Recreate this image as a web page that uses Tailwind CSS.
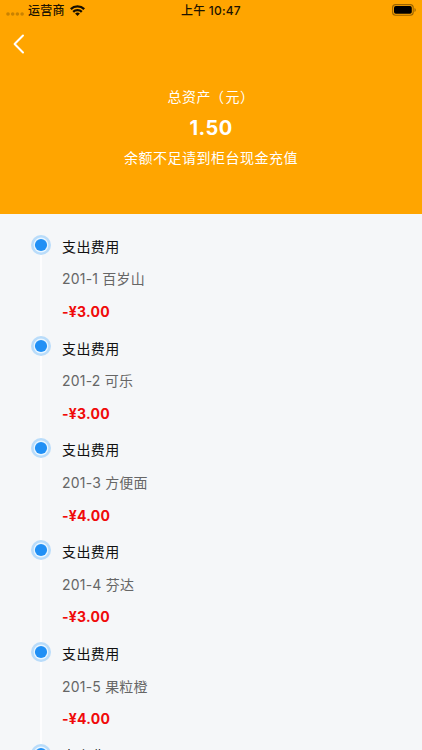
<!DOCTYPE html>
<html lang="zh-CN">
<head>
<meta charset="utf-8">
<title>总资产</title>
<script src="https://cdn.jsdelivr.net/npm/@tailwindcss/browser@4"></script>
</head>
<body class="w-[422px] h-[750px] overflow-hidden flex flex-col bg-[#f5f7f9] font-[Inter,'Noto_Sans_CJK_SC',sans-serif]">
<header class="h-[214px] shrink-0 bg-[#ffa500] flex flex-col">
  <div class="h-[21px] shrink-0 grid grid-cols-3 items-center px-[6px] text-[12px] leading-[21px] font-medium text-[#1c1300]">
    <div class="flex items-center">
      <svg class="w-[18px] h-[4px] mt-[7px]" viewBox="0 0 18 4" fill="#c98200"><circle cx="2" cy="2" r="1.8"/><circle cx="6.7" cy="2" r="1.8"/><circle cx="11.4" cy="2" r="1.8"/><circle cx="16.1" cy="2" r="1.8"/></svg>
      <span class="ml-[4px] tracking-[0.3px]">运营商</span>
      <svg class="ml-[5px] w-[15px] h-[11px]" viewBox="0 0 15 11" fill="none" stroke="#140d00" stroke-width="2.3"><path d="M.8 4.1a9.5 9.5 0 0 1 13.4 0M3.2 6.9a6.1 6.1 0 0 1 8.6 0"/><path d="M7.5 11 5.1 8.6a3.4 3.4 0 0 1 4.8 0Z" fill="#140d00" stroke="none"/></svg>
    </div>
    <div class="text-center whitespace-nowrap tracking-[0.2px]">上午 10:47</div>
    <div class="flex justify-end">
      <svg class="w-[25px] h-[12px] -mr-[1px] -mt-[1px]" viewBox="0 0 25 12"><rect x=".6" y=".6" width="20.6" height="10.6" rx="3" fill="none" stroke="#9a6400" stroke-width="1.1"/><rect x="2" y="2" width="17.8" height="7.8" rx="1.8" fill="#000"/><path d="M22.5 4v4c1.7-.6 1.7-3.4 0-4Z" fill="#9a6400"/></svg>
    </div>
  </div>
  <div class="h-[45px] shrink-0 flex items-center pl-[13px]">
    <svg class="w-[12px] h-[20px]" viewBox="0 0 12 20" fill="none" stroke="#fff" stroke-width="2" stroke-linecap="round" stroke-linejoin="round"><path d="M10 1.5 1.6 10 10 18.5"/></svg>
  </div>
  <div class="pt-[16px] flex flex-col items-center text-[14px] tracking-[0.5px] text-white">
    <div class="h-[30px] leading-[30px]">总资产<span class="-ml-[1px] mr-[1px]">（</span>元<span>）</span></div>
    <div class="h-[31px] leading-[33px] text-[20px] font-bold tracking-[0.4px]">1.50</div>
    <div class="h-[29px] leading-[29px]">余额不足请到柜台现金充值</div>
  </div>
</header>
<main id="timeline" class="pt-[16px] pl-[31px] flex flex-col"></main>
<script>
const rows = [['201-1 百岁山','3.00'],['201-2 可乐','3.00'],['201-3 方便面','4.00'],['201-4 芬达','3.00'],['201-5 果粒橙','4.00'],['201-6 雪碧','3.00']];
document.getElementById('timeline').innerHTML = rows.map(([name, amount]) => `
<section class="h-[101.8px] shrink-0 flex gap-[11px]">
  <div class="w-[20px] flex flex-col items-center pt-[4.7px]">
    <svg class="w-[20px] h-[20px] shrink-0" viewBox="0 0 20 20"><circle cx="10" cy="10" r="10" fill="#b9dcfa"/><circle cx="10" cy="10" r="7.4" fill="#e9f6ff"/><circle cx="10" cy="10" r="6.1" fill="#2190f5"/></svg>
    <div class="w-[2px] flex-1 -mb-[5px] bg-white/80"></div>
  </div>
  <div class="pt-[0.8px] text-[14px] leading-[32.6px] tracking-[0.4px]">
    <p class="text-[#111]">支出费用</p>
    <p class="text-[#666] tracking-[0.2px]">${name}</p>
    <p class="text-[#f00a0a] font-bold tracking-[0.25px]">-¥${amount}</p>
  </div>
</section>`).join('');
</script>
</body>
</html>
